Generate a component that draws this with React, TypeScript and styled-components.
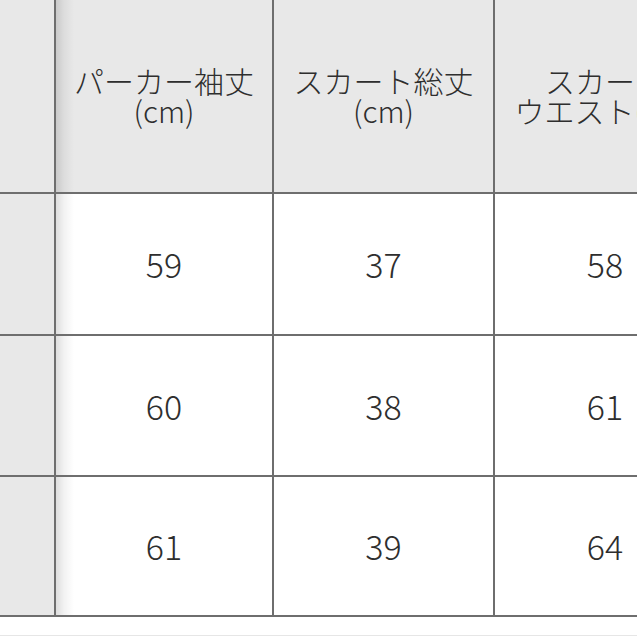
import React from 'react';
import styled, { createGlobalStyle } from 'styled-components';

const GlobalStyle = createGlobalStyle`
    html, body {
        margin: 0;
        padding: 0;
        background: #ffffff;
        overflow: hidden;
    }
    body {
        font-family: "Noto Sans CJK JP", "Noto Sans", sans-serif;
        color: #333333;
    }
`;

const headers = [
    ['パーカー袖丈', '(cm)'],
    ['スカート総丈', '(cm)'],
    ['スカート', 'ウエスト(cm)'],
];

const rows = [
    ['59', '37', '58'],
    ['60', '38', '61'],
    ['61', '39', '64'],
];

export default function App() {
    return (
        <Page>
            <GlobalStyle />
            <Table>
                <Cell $head />
                {headers.map((lines, i) => (
                    <Cell key={i} $head $shadow={i === 0}>
                        <HeadText>
                            <span>{lines[0]}</span>
                            <span>{lines[1]}</span>
                        </HeadText>
                    </Cell>
                ))}
                {rows.map((row, r) => (
                    <React.Fragment key={r}>
                        <Cell $head />
                        {row.map((v, i) => (
                            <Cell key={i} $shadow={i === 0}>
                                <Value>{v}</Value>
                            </Cell>
                        ))}
                    </React.Fragment>
                ))}
            </Table>
            <Footer />
        </Page>
    );
}

const Page = styled.div`
    width: 637px;
    height: 637px;
    overflow: hidden;
    display: flex;
    flex-direction: column;
`;

const Table = styled.div`
    display: grid;
    grid-template-columns: 54px 216px 219px 220px;
    grid-template-rows: 192px 140px 139px 138px;
    gap: 2px;
    width: 720px;
    background: #6e6e6e;
    border-bottom: 2px solid #6e6e6e;
    flex-shrink: 0;
`;

const Cell = styled.div<{ $head?: boolean; $shadow?: boolean }>`
    display: flex;
    align-items: center;
    justify-content: center;
    overflow: hidden;
    background-color: ${p => (p.$head ? '#e8e8e8' : '#ffffff')};
    background-image: ${p =>
        p.$shadow
            ? 'linear-gradient(to right, rgba(0,0,0,0.13) 0px, rgba(0,0,0,0.05) 8px, rgba(0,0,0,0) 18px)'
            : 'none'};
`;

const HeadText = styled.div`
    display: flex;
    flex-direction: column;
    align-items: center;
    font-size: 30px;
    font-weight: 300;
    line-height: 30px;
    white-space: nowrap;
    color: #2e2e2e;
    margin-top: -2px;
    padding: 0 4px;
`;

const Value = styled.span`
    font-family: "Noto Sans CJK JP", "Noto Sans", sans-serif;
    font-size: 34px;
    font-weight: 300;
    line-height: 1;
    color: #2e2e2e;
`;

const Footer = styled.div`
    height: 18px;
    border-bottom: 1px solid #e6e6e6;
`;
